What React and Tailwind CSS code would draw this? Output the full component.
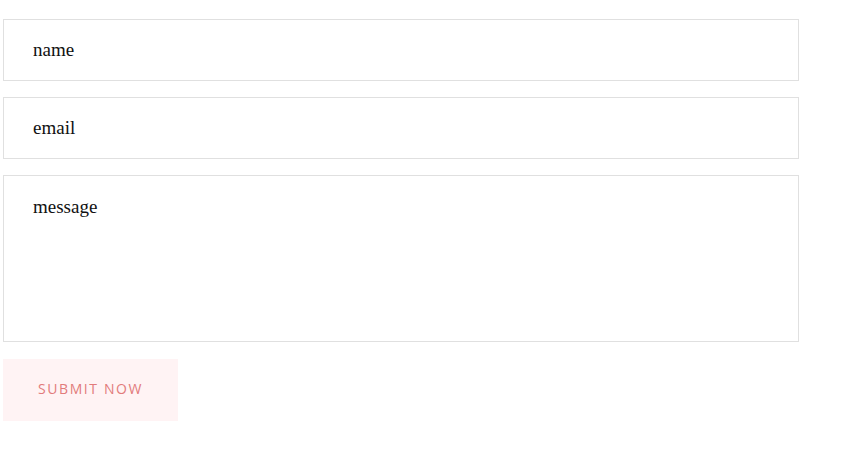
import React from 'react';

const App = () => {
  return (
    <div className="bg-white w-[851px] h-[450px] pt-[19px] pl-[3px]">
      <form className="w-[796px] flex flex-col" onSubmit={e => e.preventDefault()}>
        <input
          type="text"
          placeholder="name"
          className="h-[62px] border border-[#e0e0e0] px-[29px] text-[19px] text-[#111] placeholder:text-[#111] outline-none font-['Liberation_Serif',serif]"
        />
        <input
          type="email"
          placeholder="email"
          className="h-[62px] mt-4 border border-[#e0e0e0] px-[29px] text-[19px] text-[#111] placeholder:text-[#111] outline-none font-['Liberation_Serif',serif]"
        />
        <textarea
          placeholder="message"
          className="h-[167px] mt-4 border border-[#e0e0e0] px-[29px] pt-[19px] text-[19px] leading-[24px] text-[#111] placeholder:text-[#111] outline-none resize-none font-['Liberation_Serif',serif]"
        />
        <button
          type="submit"
          className="mt-[17px] w-[175px] h-[62px] pb-[4px] bg-[#fff3f4] text-[#e27b7b] text-[14px] tracking-[1.6px] uppercase font-['Open_Sans',sans-serif]"
        >
          Submit Now
        </button>
      </form>
    </div>
  );
};

export default App;
